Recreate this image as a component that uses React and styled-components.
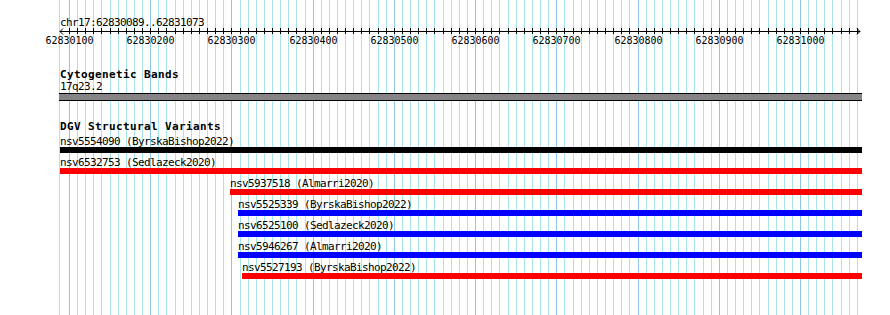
import React from "react";
import styled, { createGlobalStyle } from "styled-components";

const VIEW_START = 62830089;
const VIEW_END = 62831073;
const PX_PER_BP = 0.8123;
const ORIGIN = 60;
const PANEL_RIGHT = 862;

const toX = (bp) => ORIGIN + (Math.max(bp, VIEW_START) - VIEW_START) * PX_PER_BP;

const variants = [
  { id: "nsv5554090", study: "ByrskaBishop2022", start: 62829500, color: "#000000" },
  { id: "nsv6532753", study: "Sedlazeck2020", start: 62829800, color: "#ff0000" },
  { id: "nsv5937518", study: "Almarri2020", start: 62830298, color: "#ff0000" },
  { id: "nsv5525339", study: "ByrskaBishop2022", start: 62830308, color: "#0000ff" },
  { id: "nsv6525100", study: "Sedlazeck2020", start: 62830308, color: "#0000ff" },
  { id: "nsv5946267", study: "Almarri2020", start: 62830308, color: "#0000ff" },
  { id: "nsv5527193", study: "ByrskaBishop2022", start: 62830313, color: "#ff0000" },
];

const Global = createGlobalStyle`
  html, body {
    margin: 0;
    padding: 0;
    background: #ffffff;
  }
`;

const Canvas = styled.div`
  position: relative;
  width: 890px;
  height: 315px;
  overflow: hidden;
  background: #ffffff;
  font-family: "DejaVu Sans Mono", "Liberation Mono", monospace;
  color: #000;
`;

const GridSvg = styled.svg`
  position: absolute;
  left: 0;
  top: 0;
  z-index: 0;
`;

const Panel = styled.div`
  position: relative;
  z-index: 1;
  width: ${PANEL_RIGHT}px;
  box-sizing: border-box;
  padding: 16px 0 0 ${ORIGIN}px;
`;

const SmallText = styled.div`
  font-size: 11px;
  letter-spacing: -0.62px;
  line-height: 14px;
  height: 12px;
  white-space: nowrap;
`;

const RulerSvg = styled.svg`
  display: block;
  margin-left: -${ORIGIN}px;
`;

const Track = styled.section`
  margin-top: ${(p) => p.$gap}px;
  display: flex;
  flex-direction: column;
`;

const TrackTitle = styled.div`
  font-size: 11px;
  font-weight: bold;
  letter-spacing: 0.38px;
  line-height: 14px;
  height: 12px;
  white-space: nowrap;
`;

const Band = styled.div`
  margin: 1px 0 0 -1px;
  height: 6px;
  background: #868486;
  border-top: 1px solid #000;
  border-bottom: 1px solid #000;
`;

const Rows = styled.div`
  margin-top: 3px;
  display: flex;
  flex-direction: column;
  gap: 3px;
`;

const Row = styled.div`
  display: flex;
  flex-direction: column;
`;

const Bar = styled.div`
  height: 6px;
  background: ${(p) => p.$color};
`;

function Grid() {
  const lines = [];
  for (let bp = 62830100; bp <= VIEW_END; bp += 10) {
    const x = Math.round(toX(bp));
    lines.push({ x, major: bp % 100 === 0 });
  }
  return (
    <GridSvg width="890" height="315" shapeRendering="crispEdges">
      <line x1="59.5" x2="59.5" y1="0" y2="315" stroke="#a8e4ec" />
      {lines.map((l) => (
        <line
          key={l.x}
          x1={l.x + 0.5}
          x2={l.x + 0.5}
          y1="0"
          y2="315"
          stroke={l.major ? "#8cc6e8" : "#a8e4ec"}
        />
      ))}
    </GridSvg>
  );
}

function Ruler() {
  const ticks = [];
  for (let bp = 62830100; bp <= VIEW_END; bp += 10) ticks.push(bp);
  const right = 860;
  return (
    <RulerSvg width="890" height="20">
      <g shapeRendering="crispEdges" stroke="#000">
        <line x1={ORIGIN} x2={right} y1="3.5" y2="3.5" />
        {ticks.map((bp) => {
          const x = Math.round(toX(bp)) + 0.5;
          return <line key={bp} x1={x} x2={x} y1="0" y2="6" />;
        })}
      </g>
      <polyline points={`63,0.5 60,3.5 63,6.5`} fill="none" stroke="#000" />
      <polyline points={`${right - 3},0.5 ${right},3.5 ${right - 3},6.5`} fill="none" stroke="#000" />
      {ticks
        .filter((bp) => bp % 100 === 0)
        .map((bp) => (
          <text
            key={bp}
            x={Math.round(toX(bp)) + 0.5}
            y="15.5"
            textAnchor="middle"
            fontSize="10"
            fontFamily='"DejaVu Sans Mono", monospace'
          >
            {bp}
          </text>
        ))}
    </RulerSvg>
  );
}

export default function App() {
  return (
    <>
      <Global />
      <Canvas>
        <Grid />
        <Panel>
          <SmallText>chr17:62830089..62831073</SmallText>
          <Ruler />
          <Track $gap={20}>
            <TrackTitle>Cytogenetic Bands</TrackTitle>
            <SmallText>17q23.2</SmallText>
            <Band />
          </Track>
          <Track $gap={19}>
            <TrackTitle>DGV Structural Variants</TrackTitle>
            <Rows>
              {variants.map((v) => (
                <Row key={v.id} style={{ paddingLeft: Math.round(toX(v.start)) - ORIGIN }}>
                  <SmallText>
                    {v.id} ({v.study})
                  </SmallText>
                  <Bar $color={v.color} />
                </Row>
              ))}
            </Rows>
          </Track>
        </Panel>
      </Canvas>
    </>
  );
}
